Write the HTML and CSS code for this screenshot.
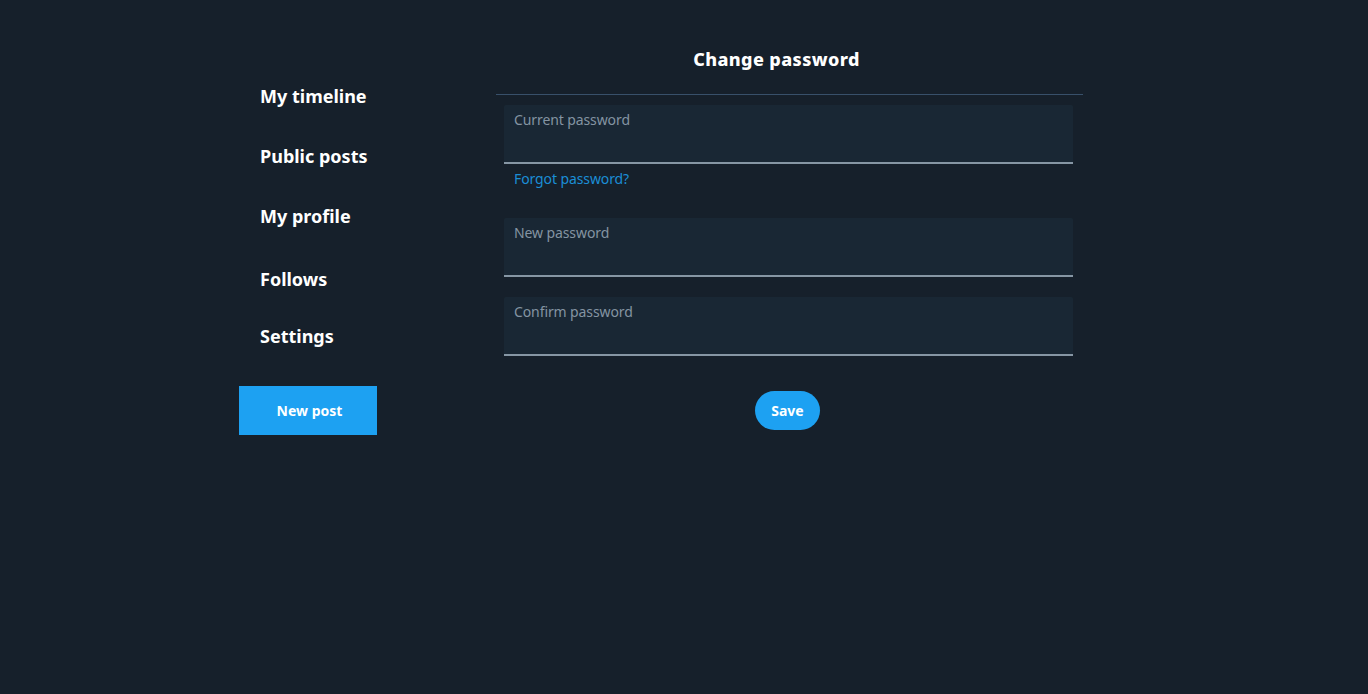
FILE: index.html
```html
<!DOCTYPE html>
<html>
<head>
<meta charset="utf-8">
<link rel="stylesheet" href="styles.css">
</head>
<body>
<div class="page">
  <aside class="sidebar">
    <nav class="nav">
      <a class="nav-item">My timeline</a>
      <a class="nav-item">Public posts</a>
      <a class="nav-item">My profile</a>
      <a class="nav-item follows">Follows</a>
      <a class="nav-item settings">Settings</a>
    </nav>
    <button class="new-post">New post</button>
  </aside>
  <main class="main">
    <h1 class="title">Change password</h1>
    <div class="form">
      <div class="field"><span class="label">Current password</span></div>
      <a class="forgot">Forgot password?</a>
      <div class="field gap1"><span class="label">New password</span></div>
      <div class="field gap2"><span class="label">Confirm password</span></div>
      <div class="actions"><button class="save">Save</button></div>
    </div>
  </main>
</div>
</body>
</html>
```
FILE: styles.css
```css
html, body {
  margin: 0;
  padding: 0;
  background: #16202b;
  height: 100%;
}
body {
  font-family: "Noto Sans", "Open Sans", sans-serif;
  color: #fff;
}
.page {
  display: flex;
  padding-left: 239px;
}
.sidebar {
  width: 257px;
  display: flex;
  flex-direction: column;
  padding-top: 80px;
}
.nav {
  display: flex;
  flex-direction: column;
}
.nav-item {
  height: 60px;
  line-height: 32px;
  padding-left: 21px;
  font-size: 18px;
  font-weight: 700;
  letter-spacing: 0;
  color: #fff;
}
.nav-item.follows { margin-top: 3px; }
.nav-item.settings { margin-top: -3px; }
.new-post {
  margin-top: 6px;
  width: 138px;
  height: 49px;
  border: none;
  background: #1da1f2;
  color: #fff;
  font-family: inherit;
  font-size: 14px;
  font-weight: 700;
  padding: 0 0 0 3px;
}
.main {
  width: 587px;
  display: flex;
  flex-direction: column;
}
.title {
  margin: 0;
  height: 95px;
  box-sizing: border-box;
  border-bottom: 1px solid #38506a;
  padding-top: 46px;
  padding-right: 26px;
  font-size: 18px;
  line-height: 26px;
  font-weight: 800;
  text-align: center;
  letter-spacing: 0.4px;
}
.form {
  padding: 10px 10px 0 8px;
  display: flex;
  flex-direction: column;
}
.field {
  height: 54px;
  background: #192734;
  border-bottom: 2px solid #8696a4;
  border-radius: 2px 2px 0 0;
  padding: 3px 10px 0;
  box-sizing: content-box;
}
.label {
  font-size: 14px;
  line-height: 18px;
  color: #8494a2;
  letter-spacing: -0.1px;
}
.forgot {
  margin-top: 5px;
  padding-left: 10px;
  font-size: 14px;
  line-height: 20px;
  color: #1b8ed6;
  letter-spacing: -0.1px;
}
.gap1 { margin-top: 29px; }
.gap2 { margin-top: 20px; }
.actions {
  display: flex;
  justify-content: center;
  margin-top: 35px;
  padding-right: 2px;
}
.save {
  width: 65px;
  height: 39px;
  border: none;
  border-radius: 20px;
  background: #1da1f2;
  color: #fff;
  font-family: inherit;
  font-size: 14px;
  font-weight: 700;
  padding: 0;
}
```
